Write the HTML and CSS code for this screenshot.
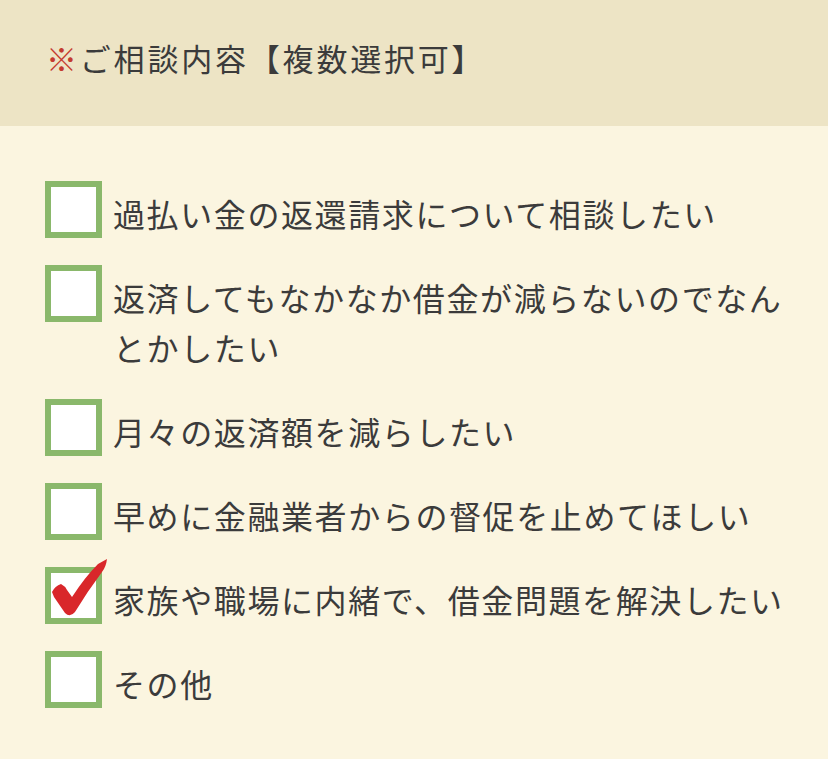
FILE: index.html
```html
<!DOCTYPE html>
<html lang="ja">
<head>
    <meta charset="UTF-8">
    <meta name="viewport" content="width=device-width, initial-scale=1.0">
    <title>ご相談内容</title>
    <link rel="stylesheet" href="styles.css">
</head>
<body>
    <div class="head">
        <p class="head-title"><span class="req">※</span>ご相談内容【複数選択可】</p>
    </div>
    <ul class="choices">
        <li class="choice"><span class="box"></span><span class="label">過払い金の返還請求について相談したい</span></li>
        <li class="choice"><span class="box"></span><span class="label">返済してもなかなか借金が減らないのでなんとかしたい</span></li>
        <li class="choice"><span class="box"></span><span class="label">月々の返済額を減らしたい</span></li>
        <li class="choice"><span class="box"></span><span class="label">早めに金融業者からの督促を止めてほしい</span></li>
        <li class="choice">
            <span class="box checked">
                <!-- 赤いチェック -->
                <svg class="check" viewBox="0 0 60 60" width="60" height="60">
                    <path d="M1 33 Q4 27 10 25 Q14 27 16 31 L21 38 Q34 18 47 5 L56 0 Q55 8 51 13 Q36 33 24 53 Q19 59 14 54 L3 38 Z" fill="#d9272a"/>
                </svg>
            </span>
            <span class="label">家族や職場に内緒で、借金問題を解決したい</span>
        </li>
        <li class="choice"><span class="box"></span><span class="label">その他</span></li>
    </ul>
</body>
</html>
```
FILE: styles.css
```css
body {
    margin: 0;
    background: #fbf5e0;
    color: #3b3b3b;
    font-family: "Noto Sans CJK JP", "Noto Sans", sans-serif;
}
.head {
    background: #ede4c5;
    height: 126px;
    padding: 0 46px;
    display: flex;
    align-items: center;
    padding-bottom: 12px;
    box-sizing: border-box;
}
.head-title {
    margin: 0;
    font-size: 31px;
    letter-spacing: 2.8px;
    line-height: 1;
}
.req {
    color: #c43a2f;
}
.choices {
    list-style: none;
    margin: 0;
    padding: 55px 20px 40px 45px;
}
.choice {
    display: flex;
    align-items: flex-start;
    gap: 11px;
    margin-bottom: 27px;
}
.box {
    flex: none;
    width: 57px;
    height: 57px;
    box-sizing: border-box;
    border: 6px solid #8ab86b;
    background: #fff;
    position: relative;
}
.check {
    position: absolute;
    left: 0;
    top: -14px;
}
.label {
    margin-top: 7px;
    font-size: 32px;
    line-height: 50px;
    letter-spacing: 1.6px;
}
```
